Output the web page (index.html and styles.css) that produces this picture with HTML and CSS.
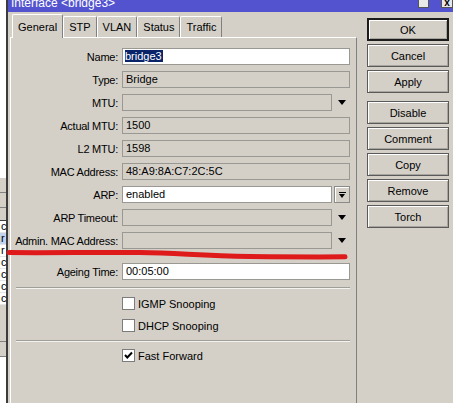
FILE: index.html
```html
<!DOCTYPE html>
<html lang="en">
<head>
    <meta charset="UTF-8">
    <title>Interface &lt;bridge3&gt;</title>
    <link rel="stylesheet" href="styles.css">
</head>
<body>
<div class="screen">
    <!-- list window sitting behind the dialog -->
    <div class="behind">
        <div class="bh-white"></div>
        <div class="bh-bar"></div>
        <div class="bh-bar"></div>
        <div class="bh-head"></div>
        <div class="bh-row">c</div>
        <div class="bh-row bh-sel">r</div>
        <div class="bh-row">r</div>
        <div class="bh-row">c</div>
        <div class="bh-row">c</div>
        <div class="bh-row">c</div>
        <div class="bh-row">c</div>
        <div class="bh-gray"></div>
        <div class="bh-bar"></div>
        <div class="bh-bar"></div>
        <div class="bh-white"></div>
    </div>

    <div class="window">
        <div class="titlebar">
            <span class="title">Interface &lt;bridge3&gt;</span>
            <span class="controls">
                <span class="ctl"></span>
                <span class="ctl ctl-close">x</span>
            </span>
        </div>

        <div class="window-body">
            <div class="tabbox">
                <div class="tabs">
                    <div class="tab active">General</div>
                    <div class="tab">STP</div>
                    <div class="tab">VLAN</div>
                    <div class="tab">Status</div>
                    <div class="tab">Traffic</div>
                </div>

                <div class="panel">
                    <div class="fields">
                        <div class="row">
                            <span class="lbl">Name:</span>
                            <div class="field edit"><span class="sel">bridge3</span></div>
                        </div>
                        <div class="row">
                            <span class="lbl">Type:</span>
                            <div class="field">Bridge</div>
                        </div>
                        <div class="row">
                            <span class="lbl">MTU:</span>
                            <div class="field"></div>
                            <span class="drop"><span class="arrow"></span></span>
                        </div>
                        <div class="row">
                            <span class="lbl">Actual MTU:</span>
                            <div class="field">1500</div>
                        </div>
                        <div class="row">
                            <span class="lbl">L2 MTU:</span>
                            <div class="field">1598</div>
                        </div>
                        <div class="row">
                            <span class="lbl">MAC Address:</span>
                            <div class="field">48:A9:8A:C7:2C:5C</div>
                        </div>
                        <div class="row">
                            <span class="lbl">ARP:</span>
                            <div class="field edit">enabled</div>
                            <span class="drop drop-btn"><span class="bar"></span><span class="arrow"></span></span>
                        </div>
                        <div class="row">
                            <span class="lbl">ARP Timeout:</span>
                            <div class="field"></div>
                            <span class="drop"><span class="arrow"></span></span>
                        </div>
                        <div class="row">
                            <span class="lbl">Admin. MAC Address:</span>
                            <div class="field"></div>
                            <span class="drop"><span class="arrow"></span></span>
                        </div>
                        <div class="row row-spaced">
                            <span class="lbl">Ageing Time:</span>
                            <div class="field edit">00:05:00</div>
                        </div>
                    </div>

                    <div class="sep"></div>

                    <div class="checks">
                        <label class="check"><span class="box"></span>IGMP Snooping</label>
                        <label class="check"><span class="box"></span>DHCP Snooping</label>
                    </div>

                    <div class="sep sep-second"></div>

                    <div class="checks">
                        <label class="check">
                            <span class="box">
                                <svg width="11" height="11" viewBox="0 0 11 11"><path d="M2 5 L4.3 7.5 L9 2.5" fill="none" stroke="#000" stroke-width="2"/></svg>
                            </span>Fast Forward
                        </label>
                    </div>
                </div>
            </div>

            <div class="actions">
                <button class="btn btn-default">OK</button>
                <button class="btn">Cancel</button>
                <button class="btn">Apply</button>
                <button class="btn btn-group">Disable</button>
                <button class="btn">Comment</button>
                <button class="btn">Copy</button>
                <button class="btn">Remove</button>
                <button class="btn">Torch</button>
            </div>
        </div>
    </div>

    <!-- red marker stroke under the admin MAC row -->
    <svg class="scribble" width="453" height="403" viewBox="0 0 453 403">
        <path d="M9 252.5 C50 253 100 252 140 252.5 S200 256 250 256.5 S320 257 345 256.8" fill="none" stroke="#df1a1a" stroke-width="5" stroke-linecap="round"/>
    </svg>
</div>
</body>
</html>
```

FILE: styles.css
```css
body {
    margin: 0;
    font-family: 'Liberation Sans', Arial, sans-serif;
    font-size: 11px;
    color: #000;
    background-color: #d4d0c8;
}
.screen {
    position: relative;
    display: flex;
    width: 453px;
    height: 403px;
    overflow: hidden;
}

/* list window behind */
.behind {
    width: 6px;
    display: flex;
    flex-direction: column;
    background-color: #fff;
    overflow: hidden;
}
.bh-white {
    height: 178px;
    flex-shrink: 0;
}
.bh-bar {
    height: 14px;
    flex-shrink: 0;
    background-color: #d4d0c8;
    border-bottom: 1px solid #808080;
}
.bh-head {
    height: 12px;
    flex-shrink: 0;
    background-color: #d4d0c8;
    border-bottom: 1px solid #404040;
}
.bh-row {
    height: 11px;
    flex-shrink: 0;
    line-height: 11px;
    padding-left: 1px;
    border-bottom: 1px solid #e4e4e4;
}
.bh-sel {
    background-color: #c2d4f0;
}
.bh-gray {
    height: 22px;
    flex-shrink: 0;
    background-color: #d4d0c8;
}

/* dialog window */
.window {
    flex: 1;
    display: flex;
    flex-direction: column;
    border-left: 2px solid #3c3c3c;
    background-color: #d4d0c8;
}
.titlebar {
    height: 12px;
    display: flex;
    justify-content: space-between;
    align-items: flex-start;
    background-color: #5353cf;
    color: #fff;
    overflow: hidden;
}
.title {
    padding-left: 3px;
    line-height: 7px;
    font-size: 12px;
}
.controls {
    display: flex;
    gap: 12px;
}
.ctl {
    width: 9px;
    height: 7px;
    background-color: #e8e8e8;
    border: 1px solid #555;
    border-top: none;
    color: #000;
    font-size: 10px;
    font-weight: bold;
    line-height: 5px;
    text-align: center;
}
.ctl-close {
    width: 10px;
}

.window-body {
    flex: 1;
    display: flex;
}

.tabbox {
    display: flex;
    flex-direction: column;
    margin-left: 2px;
    padding-top: 2px;
    width: 347px;
}
.tabs {
    display: flex;
    align-items: flex-end;
    height: 23px;
    margin-left: 2px;
}
.tab {
    position: relative;
    height: 21px;
    line-height: 20px;
    padding: 0 5px;
    box-sizing: border-box;
    border-top: 1px solid #fff;
    border-left: 1px solid #fff;
    border-right: 1px solid #808080;
    border-radius: 2px 2px 0 0;
}
.tab.active {
    height: 24px;
    line-height: 24px;
    margin-bottom: -1px;
    background-color: #d4d0c8;
    z-index: 1;
}

.panel {
    flex: 1;
    border-top: 1px solid #fff;
    border-left: 1px solid #fff;
    border-right: 1px solid #808080;
    padding: 10px 6px 0 0;
}
.fields {
    display: flex;
    flex-direction: column;
    gap: 6px;
}
.row {
    display: flex;
    align-items: center;
    height: 17px;
}
.row-spaced {
    margin-top: 8px;
}
.lbl {
    width: 107px;
    margin-right: 4px;
    text-align: right;
    white-space: nowrap;
    letter-spacing: -0.25px;
}
.field {
    flex: 1;
    height: 17px;
    box-sizing: border-box;
    border: 1px solid #9a9893;
    padding-left: 3px;
    line-height: 15px;
    white-space: nowrap;
}
.field.edit {
    background-color: #fff;
}
.sel {
    background-color: #0a246a;
    color: #fff;
    padding: 0 1px 0 0;
    margin-left: -1px;
}
.drop {
    width: 16px;
    height: 17px;
    margin-left: 2px;
    display: flex;
    flex-direction: column;
    align-items: center;
    justify-content: center;
    box-sizing: border-box;
}
.drop-btn {
    border: 1px solid #8a8a8a;
    box-shadow: inset 1px 1px #fff;
}
.arrow {
    width: 0;
    height: 0;
    border-left: 4.5px solid transparent;
    border-right: 4.5px solid transparent;
    border-top: 5px solid #000;
}
.drop-btn .arrow {
    border-left-width: 3.5px;
    border-right-width: 3.5px;
    border-top-width: 4px;
}
.bar {
    width: 7px;
    height: 1px;
    margin-bottom: 1px;
    background-color: #000;
}

.sep {
    margin: 7px 0 0 5px;
    border-top: 1px solid #a09e98;
    border-bottom: 1px solid #f4f3ef;
}
.sep-second {
    margin-top: 8px;
}
.checks {
    display: flex;
    flex-direction: column;
    gap: 9px;
    padding: 8px 0 0 111px;
}
.sep-second + .checks {
    padding-top: 7px;
}
.check {
    display: flex;
    align-items: center;
    height: 13px;
    gap: 3px;
}
.box {
    width: 13px;
    height: 13px;
    box-sizing: border-box;
    border: 1px solid #7c7c7c;
    background-color: #fff;
    display: flex;
    align-items: center;
    justify-content: center;
}

.actions {
    width: 82px;
    margin-left: 10px;
    padding-top: 6px;
    display: flex;
    flex-direction: column;
    gap: 3px;
}
.btn {
    height: 23px;
    padding: 0;
    font-family: inherit;
    font-size: 11px;
    color: #000;
    background-color: #d4d0c8;
    border: 1px solid #5a5a5a;
    box-shadow: inset 1px 1px #fff, inset -1px -1px #a8a59e;
}
.btn-default {
    border: 2px solid #1c1c1c;
}
.btn-group {
    margin-top: 5px;
}

.scribble {
    position: absolute;
    left: 0;
    top: 0;
    pointer-events: none;
}
```
